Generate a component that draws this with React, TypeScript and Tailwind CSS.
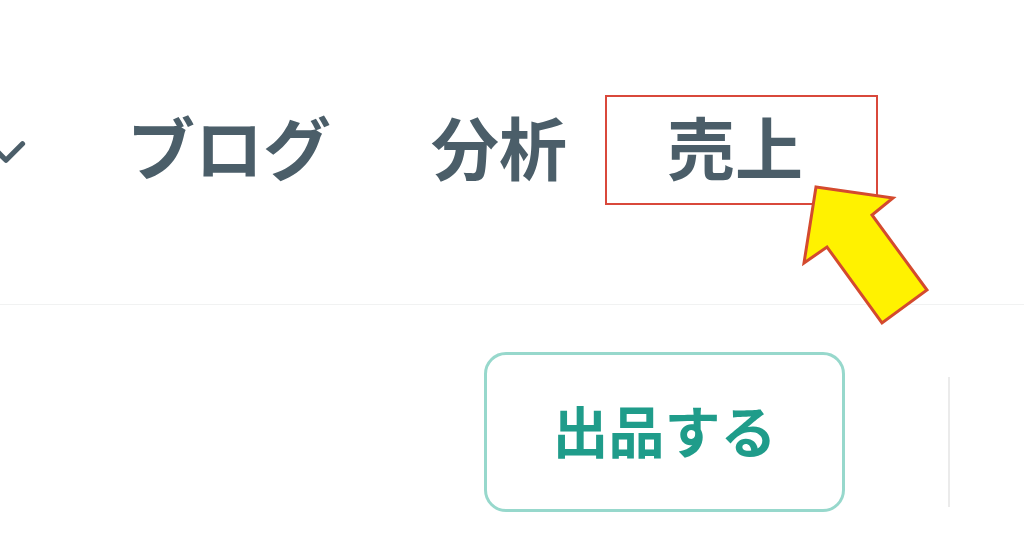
import { ChevronDown } from 'lucide-react';

const navItems = ['ブログ', '分析', '売上'];

export default function App() {
  return (
    <div
      className="relative w-[1024px] h-[538px] overflow-hidden bg-white"
      style={{ fontFamily: '"Noto Sans CJK JP", "Noto Sans", sans-serif' }}
    >
      {/* Header nav */}
      <header className="h-[305px] flex items-center border-b border-[#f1f2f2]">
        <ChevronDown className="-ml-[27px] w-[66px] h-[66px] text-[#4b5e69] shrink-0" strokeWidth={1.9} />
        <nav className="flex items-center ml-[88px] gap-[100px] -mt-[12px]">
          {navItems.map((item) => (
            <div
              key={item}
              className="relative text-[68px] leading-none font-bold text-[#4b5e69]"
            >
              {item}
              {/* Annotation box */}
              {item === '売上' && (
                <div className="absolute -left-[62px] -right-[75px] -top-[17px] -bottom-[25px] border-2 border-[#d9483b]" />
              )}
            </div>
          ))}
        </nav>
      </header>

      {/* Actions row */}
      <div className="flex items-start pl-[484px] pt-[47px]">
        <button className="w-[361px] h-[160px] pb-[6px] rounded-[22px] border-[3px] border-[#97d8cc] bg-white flex items-center justify-center text-[56px] font-bold text-[#1f9c8a] leading-none">
          出品する
        </button>
        <div className="ml-[103px] mt-[25px] w-[2px] h-[130px] bg-[#ebebeb]" />
      </div>

      {/* Pointer arrow */}
      <svg className="absolute left-0 top-0 pointer-events-none" width="1024" height="538">
        <polygon
          points="816,187 893,198 872,215 927,290 882,323 827,247 804,263"
          fill="#fff200"
          stroke="#d44a2e"
          strokeWidth="3"
          strokeLinejoin="miter"
        />
      </svg>
    </div>
  );
}
